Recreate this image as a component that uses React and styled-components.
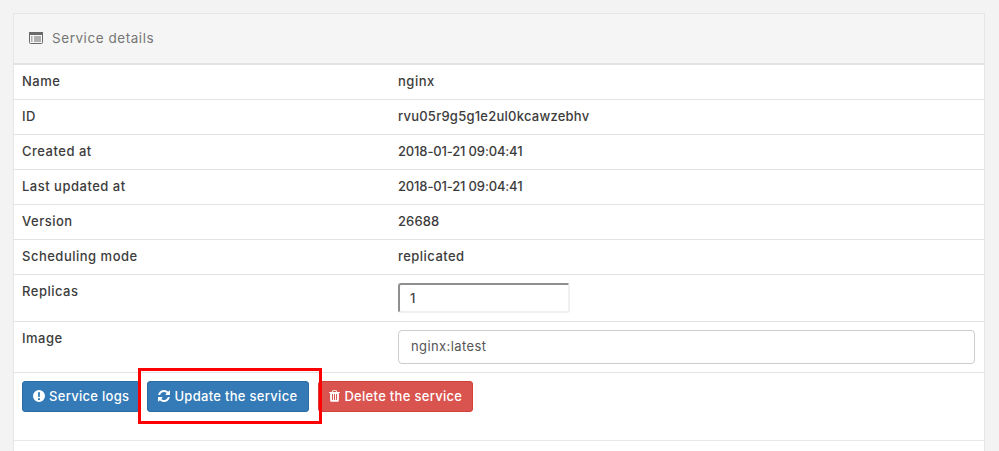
import styled, { createGlobalStyle } from "styled-components";

const GlobalStyle = createGlobalStyle`
  html, body { margin: 0; padding: 0; height: 451px; overflow: hidden; background: #f3f3f3; }
  body { font-family: Inter, "Open Sans", "Liberation Sans", sans-serif; font-size: 13px; color: #333; }
`;

const Page = styled.div`padding: 13px 14px 0 13px;`;
const Panel = styled.section`
  background: #fff;
  border: 1px solid #e6e6e6;
  border-bottom: 0;
  height: 438px;
  box-sizing: border-box;
  overflow: hidden;
`;
const Header = styled.header`
  height: 51px;
  box-sizing: border-box;
  background: #f5f5f5;
  border-bottom: 2px solid #e2e2e2;
  display: flex;
  align-items: center;
  gap: 9px;
  padding: 0 0 2px 15px;
  color: #767676;
  font-size: 13.5px;
  letter-spacing: 0.55px;
`;
const Row = styled.div`
  display: grid;
  grid-template-columns: 376px 1fr;
  height: ${(p) => p.$height || 35}px;
  box-sizing: border-box;
  border-bottom: 1px solid #e2e2e2;
`;
const Label = styled.div`
  padding: 8px 8px 0;
  font-size: 13px;
  font-weight: 500;
  letter-spacing: 0.5px;
  color: #3c3c3c;
`;
const Value = styled(Label)`
  letter-spacing: ${(p) => p.$spacing}px;
`;
const FieldCell = styled.div`
  padding: 8px 9px 0 8px;
`;
const NumberInput = styled.input`
  display: block;
  width: 172px;
  height: 30px;
  box-sizing: border-box;
  padding: 0 10px;
  border-width: 2px;
  border-style: solid;
  border-color: #8f8f8f #efefef #efefef #8f8f8f;
  border-radius: 3px;
  background: #fff;
  font: 500 13px Inter, "Open Sans", sans-serif;
  color: #444;
  outline: none;
`;
const TextInput = styled.input`
  display: block;
  width: 100%;
  height: 34px;
  box-sizing: border-box;
  padding: 0 12px 2px;
  border: 1px solid #ccc;
  border-radius: 4px;
  background: #fff;
  font: 400 13px Inter, "Open Sans", sans-serif;
  letter-spacing: 0.4px;
  color: #555;
  outline: none;
`;
const Actions = styled.div`
  display: flex;
  align-items: flex-start;
  height: 68px;
  box-sizing: border-box;
  padding: 8px 8px 0;
  border-bottom: 1px solid #e8e8e8;
`;
const Button = styled.button`
  position: relative;
  display: inline-flex;
  align-items: center;
  gap: 4px;
  height: 31px;
  box-sizing: border-box;
  margin-right: ${(p) => p.$gap || 0}px;
  padding: 0 ${(p) => p.$right || 10}px 2px 10px;
  border: 1px solid ${(p) => (p.$danger ? "#d43f3a" : "#2e6da4")};
  border-radius: 3px;
  background: ${(p) => (p.$danger ? "#d9534f" : "#337ab7")};
  color: #fff;
  font: 500 13px Inter, "Open Sans", sans-serif;
  letter-spacing: 0.3px;
  white-space: nowrap;
`;
const Highlight = styled.span`
  position: absolute;
  z-index: 1;
  left: -10px;
  right: -14px;
  top: -14px;
  bottom: -13px;
  border: 3px solid #f00;
  pointer-events: none;
`;

const ListIcon = () => (
  <svg width="14" height="12" viewBox="0 0 14 12">
    <rect x="0.5" y="0.5" width="13" height="11" rx="1" fill="none" stroke="#6a6a6a" />
    <rect x="0" y="0" width="14" height="3" fill="#6a6a6a" />
    <path d="M2 5h1.5M2 7h1.5M2 9h1.5M5 5h7M5 7h7M5 9h7" stroke="#6a6a6a" />
  </svg>
);
const AlertIcon = () => (
  <svg width="12" height="12" viewBox="0 0 12 12">
    <path fill="currentColor" fillRule="evenodd" d="M6 0a6 6 0 1 1 0 12A6 6 0 0 1 6 0zM5 2.2l.2 4.9h1.6L7 2.2zM5 8.2V10h2V8.2z" />
  </svg>
);
const RefreshIcon = () => (
  <svg width="12" height="12" viewBox="128 128 1536 1536">
    <path fill="currentColor" d="M1639 1056q0 5-1 7-64 268-268 434.5t-478 166.5q-146 0-282.5-55t-243.5-157l-129 129q-19 19-45 19t-45-19-19-45v-448q0-26 19-45t45-19h448q26 0 45 19t19 45-19 45l-137 137q71 66 161 102t187 36q134 0 250-65t186-179q11-17 53-117 8-23 30-23h192q13 0 22.5 9.5t9.5 22.5zm25-800v448q0 26-19 45t-45 19h-448q-26 0-45-19t-19-45 19-45l138-138q-148-137-349-137-134 0-250 65t-186 179q-11 17-53 117-8 23-30 23h-199q-13 0-22.5-9.5t-9.5-22.5v-7q65-268 270-434.5t480-166.5q146 0 284 55.5t245 156.5l130-129q19-19 45-19t45 19 19 45z" />
  </svg>
);
const TrashIcon = () => (
  <svg width="11" height="12" viewBox="176 128 1440 1536">
    <path fill="currentColor" d="M704 1376v-704q0-14-9-23t-23-9h-64q-14 0-23 9t-9 23v704q0 14 9 23t23 9h64q14 0 23-9t9-23zm256 0v-704q0-14-9-23t-23-9h-64q-14 0-23 9t-9 23v704q0 14 9 23t23 9h64q14 0 23-9t9-23zm256 0v-704q0-14-9-23t-23-9h-64q-14 0-23 9t-9 23v704q0 14 9 23t23 9h64q14 0 23-9t9-23zm-544-992h448l-48-117q-7-9-17-11h-317q-10 2-17 11zm928 32v64q0 14-9 23t-23 9h-96v948q0 83-47 143.5t-113 60.5h-832q-66 0-113-58.5t-47-141.5v-952h-96q-14 0-23-9t-9-23v-64q0-14 9-23t23-9h309l70-167q15-37 54-63t79-26h320q40 0 79 26t54 63l70 167h309q14 0 23 9t9 23z" />
  </svg>
);

// letter spacing per value: digits are narrower in the original font
const details = [
  ["Name", "nginx", 0.5],
  ["ID", "rvu05r9g5g1e2ul0kcawzebhv", 0.24],
  ["Created at", "2018-01-21 09:04:41", -0.15],
  ["Last updated at", "2018-01-21 09:04:41", -0.15],
  ["Version", "26688", 0.1],
  ["Scheduling mode", "replicated", 0.46],
];

export default function App() {
  return (
    <Page>
      <GlobalStyle />
      <Panel>
        <Header><ListIcon /> Service details</Header>
        {details.map(([label, value, spacing]) => (
          <Row key={label}><Label>{label}</Label><Value $spacing={spacing}>{value}</Value></Row>
        ))}
        <Row $height={47}>
          <Label>Replicas</Label>
          <FieldCell><NumberInput defaultValue="1" /></FieldCell>
        </Row>
        <Row $height={51}>
          <Label>Image</Label>
          <FieldCell><TextInput defaultValue="nginx:latest" /></FieldCell>
        </Row>
        <Actions>
          <Button $gap={7}><AlertIcon /> Service logs</Button>
          <Button $gap={9} $right={11}><RefreshIcon /> Update the service<Highlight /></Button>
          <Button $danger><TrashIcon /> Delete the service</Button>
        </Actions>
      </Panel>
    </Page>
  );
}
